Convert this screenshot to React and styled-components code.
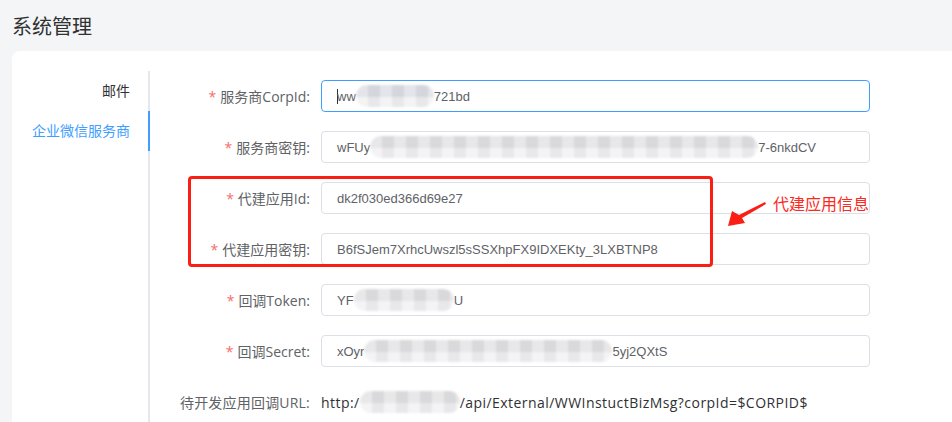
import React from 'react';
import styled, { createGlobalStyle } from 'styled-components';

const GlobalStyle = createGlobalStyle`
  html, body {
    margin: 0;
    padding: 0;
    overflow: hidden;
    background: #f4f5f7;
    font-family: "Open Sans", "Noto Sans CJK SC", sans-serif;
  }
`;

const Page = styled.div`
  width: 100%;
  height: 100vh;
  overflow: hidden;
  background: #f4f5f7;
`;

const Title = styled.div`
  height: 51px;
  display: flex;
  align-items: center;
  padding-left: 12px;
  padding-bottom: 1px;
  box-sizing: border-box;
  font-size: 20px;
  color: #303133;
`;

const Card = styled.div`
  display: flex;
  margin-left: 12px;
  margin-right: -30px;
  padding: 20px 0 0 20px;
  background: #ffffff;
  border-radius: 8px 0 0 0;
  height: 400px;
`;

const TabNav = styled.div`
  width: 116px;
  flex-shrink: 0;
  border-right: 2px solid #e4e7ed;
`;

const TabItem = styled.div`
  height: 40px;
  line-height: 40px;
  padding-right: 18px;
  text-align: right;
  font-size: 14px;
  white-space: nowrap;
  color: ${(p) => (p.$active ? '#409eff' : '#303133')};
  position: relative;

  &::after {
    content: '';
    position: absolute;
    right: -2px;
    top: 0;
    width: 2px;
    height: 40px;
    background: ${(p) => (p.$active ? '#409eff' : 'transparent')};
  }
`;

const Form = styled.div`
  padding: 9px 0 0 11px;
  display: flex;
  flex-direction: column;
`;

const Group = styled.div`
  position: relative;
`;

const Row = styled.div`
  display: flex;
  align-items: center;
  margin-bottom: 19px;
`;

const Label = styled.div`
  width: 160px;
  flex-shrink: 0;
  padding-right: 11px;
  box-sizing: border-box;
  text-align: right;
  font-size: 14px;
  color: #606266;
  white-space: nowrap;
  letter-spacing: ${(p) => (p.$wide ? '0.2px' : '0')};
`;

const Star = styled.span`
  color: #f56c6c;
  margin-right: 4px;
`;

const Input = styled.div`
  width: 549px;
  height: 32px;
  box-sizing: border-box;
  border: 1px solid ${(p) => (p.$focus ? '#409eff' : '#dcdfe6')};
  border-radius: 4px;
  padding-left: 15px;
  display: flex;
  align-items: center;
  font-family: "Liberation Sans", Arial, sans-serif;
  font-size: 13px;
  color: #606266;
  white-space: nowrap;
  overflow: hidden;
`;

const Caret = styled.span`
  display: inline-block;
  width: 1px;
  height: 15px;
  background: #303133;
  margin-right: -1px;
`;

const Blur = styled.span`
  display: inline-block;
  height: 22px;
  width: ${(p) => p.$w}px;
  border-radius: 11px;
  background:
    repeating-linear-gradient(90deg, rgba(255,255,255,0.25) 0 12px, rgba(0,0,0,0.03) 12px 24px),
    linear-gradient(180deg, ${(p) => p.$tint || '#e0e0e2'} 0 55%, #f0f0f2 55% 100%);
  filter: blur(1.2px);
  flex-shrink: 0;
`;

const UrlText = styled.div`
  display: flex;
  align-items: center;
  height: 32px;
  font-size: 14px;
  letter-spacing: 0.45px;
  color: #303133;
  white-space: nowrap;
`;

const RedBox = styled.div`
  position: absolute;
  left: 27px;
  top: -6px;
  width: 525px;
  height: 91px;
  box-sizing: border-box;
  border: 3px solid #fa1e14;
  border-radius: 4px;
  pointer-events: none;
`;

const Arrow = styled.svg`
  position: absolute;
  left: 563px;
  top: 16px;
`;

const Note = styled.div`
  position: absolute;
  left: 612px;
  top: 9px;
  font-size: 16px;
  color: #fa2a1e;
  font-family: "Noto Sans CJK SC", sans-serif;
  white-space: nowrap;
`;

function Field({ label, required = true, children, focus }) {
  return (
    <Row>
      <Label>
        {required && <Star>*</Star>}
        {label}
      </Label>
      <Input $focus={focus}>{children}</Input>
    </Row>
  );
}

export default function App() {
  return (
    <Page>
      <GlobalStyle />
      <Title>系统管理</Title>
      <Card>
        <TabNav>
          <TabItem>邮件</TabItem>
          <TabItem $active>企业微信服务商</TabItem>
        </TabNav>
        <Form>
          <Field label="服务商CorpId:" focus>
            <Caret />
            ww<Blur $w={78} $tint="#dadde3" />721bd
          </Field>
          <Field label="服务商密钥:">
            wFUy<Blur $w={388} />7-6nkdCV
          </Field>
          <Group>
            <Field label="代建应用Id:">dk2f030ed366d69e27</Field>
            <Field label="代建应用密钥:">B6fSJem7XrhcUwszl5sSSXhpFX9IDXEKty_3LXBTNP8</Field>
            <RedBox />
            <Arrow width="46" height="32" viewBox="0 0 46 32">
              <polygon points="41,4 15,17 8,13 4,28 21,25 18,20 42,6" fill="#fa1e14" />
            </Arrow>
            <Note>代建应用信息</Note>
          </Group>
          <Field label="回调Token:">
            YF<Blur $w={100} />U
          </Field>
          <Field label="回调Secret:">
            xOyr<Blur $w={248} />5yj2QXtS
          </Field>
          <Row>
            <Label $wide>待开发应用回调URL:</Label>
            <UrlText>
              http:/<Blur $w={100} />/api/External/WWInstuctBizMsg?corpId=$CORPID$
            </UrlText>
          </Row>
        </Form>
      </Card>
    </Page>
  );
}
